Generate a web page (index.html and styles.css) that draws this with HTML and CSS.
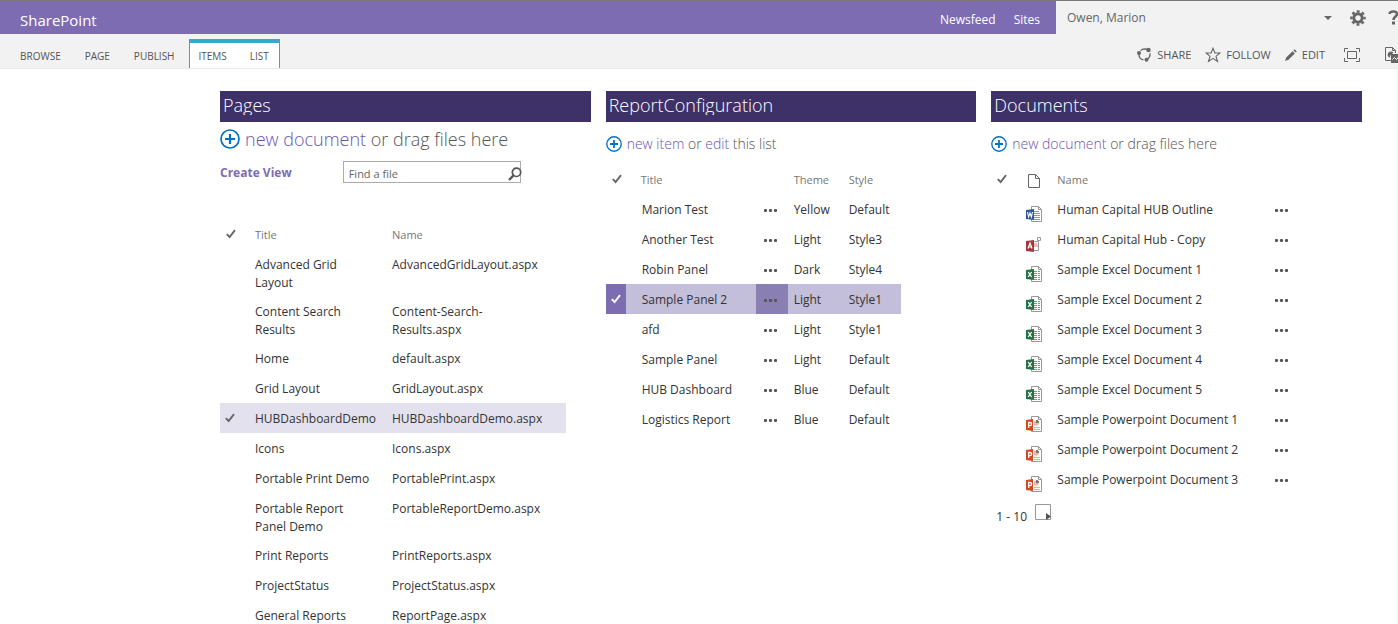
FILE: index.html
```html
<!DOCTYPE html>
<html lang="en">
<head>
<meta charset="utf-8">
<title>SharePoint</title>
<link rel="stylesheet" href="styles.css">
</head>
<body>
<svg class="sprite" aria-hidden="true">
  <symbol id="check" viewBox="0 0 10 10"><path d="M0.8 5.2 3.6 8 9 1.200" fill="none" stroke="currentColor" stroke-width="1.900"/></symbol>
  <symbol id="dots" viewBox="0 0 13 3"><circle cx="1.500" cy="1.500" r="1.600" fill="currentColor"/><circle cx="6.500" cy="1.500" r="1.600" fill="currentColor"/><circle cx="11.500" cy="1.500" r="1.600" fill="currentColor"/></symbol>
  <symbol id="plus" viewBox="0 0 20 20"><circle cx="10" cy="10" r="9" fill="none" stroke="#0072c6" stroke-width="1.7"/><path d="M10 5v10M5 10h10" stroke="#0072c6" stroke-width="2.2"/></symbol>
  <symbol id="page" viewBox="0 0 12 14"><path d="M.5.5h7l4 4v9H.5zM7.500.5v4h4" fill="#fff" stroke="#666"/></symbol>
  <symbol id="word" viewBox="0 0 16 16"><path d="M5.500.5h7l3 3v12h-10z" fill="#fff" stroke="#999"/><path d="M12.500.5v3h3" fill="none" stroke="#999"/><path d="M8 5.500h5M8 7.500h6M8 9.500h6M8 11.500h6M8 13.500h6" stroke="#999"/><path d="M0 4l8-1v11l-8-1z" fill="#2b579a"/><path d="M1.500 6l1.100 5L4 7l1.400 4 1.100-5" fill="none" stroke="#fff" stroke-width="1.100"/></symbol>
  <symbol id="access" viewBox="0 0 16 16"><path d="M11.500 1.500h3v3h-3zM8.500 5.500h4v9h-5M12 10h-4" fill="none" stroke="#999"/><path d="M8 7h3v3H8z" fill="#f2b6b6"/><path d="M0 5l8-1v12l-8-1z" fill="#a4373a"/><path d="M2 12.500 4 7l2 5.500M2.700 11h2.600" fill="none" stroke="#fff" stroke-width="1.200"/></symbol>
  <symbol id="excel" viewBox="0 0 16 16"><path d="M5.500.5h7l3 3v12h-10z" fill="#fff" stroke="#999"/><path d="M12.500.5v3h3" fill="none" stroke="#999"/><path d="M8 5.500h6M8 7.500h6M8 9.500h6M8 11.500h6M8 13.500h6" stroke="#5fa67c" stroke-dasharray="3 1"/><path d="M0 4l8-1v11l-8-1z" fill="#217346"/><path d="M2.200 6l3.400 5M5.600 6l-3.400 5" stroke="#fff" stroke-width="1.300"/></symbol>
  <symbol id="ppt" viewBox="0 0 16 16"><path d="M5.500.5h7l3 3v12h-10z" fill="#fff" stroke="#999"/><path d="M12.500.5v3h3" fill="none" stroke="#999"/><path d="M8 5h2v2h3a3 3 0 0 1-5 2z" fill="#f4b79f"/><path d="M10 4h2v1h1v2h-3z" fill="#777"/><path d="M8 11.500h6M8 13.500h6" stroke="#f4a98c"/><path d="M0 4l7-1v12l-7-1z" fill="#d24726"/><path d="M2.700 12V6.500h1.300a1.500 1.500 0 0 1 0 3.200H2.700" fill="none" stroke="#fff" stroke-width="1.300"/></symbol>
</svg>

<header class="suite">
  <div class="suite-brand">
    <a class="brand" href="#">SharePoint</a>
    <nav class="suite-links"><a href="#">Newsfeed</a><a href="#">Sites</a></nav>
  </div>
  <div class="suite-user">
    <button class="user">Owen, Marion<svg width="8" height="4" viewBox="0 0 8 4"><path d="M0 0h8L4 4z" fill="#666"/></svg></button>
    <button class="icon-btn" aria-label="Settings"><svg width="16" height="16" viewBox="0 0 16 16"><circle cx="8" cy="8" r="4.200" fill="none" stroke="#666" stroke-width="3"/><circle cx="8" cy="8" r="6.600" fill="none" stroke="#666" stroke-width="2.400" stroke-dasharray="2.800 2.380" stroke-dashoffset="1.400"/></svg></button>
    <button class="icon-btn help" aria-label="Help"><svg width="12" height="15" viewBox="0 0 12 15"><path d="M1.500 4C1.800 0.600 9.300 0.400 9 4.200 8.800 6.500 5.500 6.600 5.500 10" fill="none" stroke="#666" stroke-width="2.500"/><path d="M4 11.500h3v3H4z" fill="#666"/></svg></button>
  </div>
</header>

<div class="ribbon">
  <nav class="tabs">
    <a href="#">BROWSE</a><a href="#">PAGE</a><a href="#">PUBLISH</a>
    <span class="tab-group"><a href="#">ITEMS</a><a href="#">LIST</a></span>
  </nav>
  <div class="actions">
    <button><svg width="15" height="15" viewBox="0 0 15 15"><circle cx="7.500" cy="7.500" r="5.500" fill="none" stroke="#666" stroke-width="1.300" stroke-dasharray="8 3.520" stroke-dashoffset="2"/><circle cx="11.500" cy="3" r="2.200" fill="#666"/><circle cx="2" cy="6" r="2" fill="#666"/><circle cx="9.500" cy="12.800" r="2" fill="#666"/></svg>SHARE</button>
    <button><svg width="16" height="16" viewBox="0 0 16 16"><path d="M8 1.300 9.900 6H15l-4 3.400 1.500 5.100L8 11.400l-4.500 3.100L5 9.400 1 6h5.100z" fill="none" stroke="#666" stroke-width="1.100"/></svg>FOLLOW</button>
    <button><svg width="12" height="12" viewBox="0 0 12 12"><path d="M0 12l1.200-3.600L7.600 2.200l2.200 2.200L3.500 10.700zM8.400 1.400l1.200-1.200 2.200 2.200-1.200 1.200z" fill="#666"/></svg>EDIT</button>
    <button class="focus" aria-label="Focus on content"><svg width="16" height="14" viewBox="0 0 16 14"><path d="M3.500 3.500h9v7h-9zM.5 4V.5H4M12 .5h3.500V4M15.500 10v3.500H12M4 13.500H.5V10" fill="none" stroke="#666"/></svg></button>
    <button class="report" aria-label="Page report"><svg width="16" height="16" viewBox="0 0 16 16"><path d="M6 13.500H.5V.5h7l3 3V6M7.500.5v3h3" fill="none" stroke="#666"/><path d="M2.500 8a3.500 3.500 0 0 1 6-2.400l-2 1.900a2 2 0 0 0-.9 3.300A3.500 3.500 0 0 1 2.500 8zM6 7h10v9H6z" fill="#666"/><path d="M7.500 12.500l2-2 2 2 2.500-3" fill="none" stroke="#fff"/></svg></button>
  </div>
</div>

<main class="zones">
  <section>
    <h2 class="title"><span>Pages</span></h2>
    <p class="hero hero-large"><svg width="20" height="20"><use href="#plus"/></svg><span><a href="#">new document</a> or drag files here</span></p>
    <div class="tools">
      <a class="create" href="#">Create View</a>
      <form class="search"><input type="text" placeholder="Find a file" aria-label="Find a file"><button type="button" aria-label="Search"><svg width="14" height="14" viewBox="0 0 14 14"><circle cx="8.500" cy="5.300" r="4.200" fill="none" stroke="#555" stroke-width="1.700"/><path d="M5.500 8.400 1 13" stroke="#555" stroke-width="2.300"/></svg></button></form>
    </div>
    <table class="list pages">
      <colgroup><col class="w-check-wide"><col class="w-page-title"><col class="w-page-name"></colgroup>
      <thead><tr><th class="tick"><svg width="10" height="10"><use href="#check"/></svg></th><th>Title</th><th>Name</th></tr></thead>
      <tbody>
        <tr><td></td><td>Advanced Grid Layout</td><td><a href="#">AdvancedGridLayout.aspx</a></td></tr>
        <tr><td></td><td>Content Search Results</td><td><a href="#">Content-Search-<wbr>Results.aspx</a></td></tr>
        <tr><td></td><td>Home</td><td><a href="#">default.aspx</a></td></tr>
        <tr><td></td><td>Grid Layout</td><td><a href="#">GridLayout.aspx</a></td></tr>
        <tr class="current"><td class="tick"><svg width="10" height="10"><use href="#check"/></svg></td><td>HUBDashboardDemo</td><td><a href="#">HUBDashboardDemo.aspx</a></td></tr>
        <tr><td></td><td>Icons</td><td><a href="#">Icons.aspx</a></td></tr>
        <tr><td></td><td>Portable Print Demo</td><td><a href="#">PortablePrint.aspx</a></td></tr>
        <tr><td></td><td>Portable Report Panel Demo</td><td><a href="#">PortableReportDemo.aspx</a></td></tr>
        <tr><td></td><td>Print Reports</td><td><a href="#">PrintReports.aspx</a></td></tr>
        <tr><td></td><td>ProjectStatus</td><td><a href="#">ProjectStatus.aspx</a></td></tr>
        <tr><td></td><td>General Reports</td><td><a href="#">ReportPage.aspx</a></td></tr>
      </tbody>
    </table>
  </section>

  <section>
    <h2 class="title"><span>ReportConfiguration</span></h2>
    <p class="hero"><svg width="16" height="16"><use href="#plus"/></svg><span><a href="#">new item</a> or <a href="#">edit</a> this list</span></p>
    <table class="list reports">
      <colgroup><col class="w-check"><col class="w-report-title"><col class="w-menu"><col class="w-theme"><col class="w-style"></colgroup>
      <thead><tr><th class="tick"><svg width="10" height="10"><use href="#check"/></svg></th><th class="inset">Title</th><th></th><th>Theme</th><th>Style</th></tr></thead>
      <tbody>
        <tr><td></td><td class="inset"><a href="#">Marion Test</a></td><td class="menu"><button aria-label="Open menu"><svg width="13" height="3"><use href="#dots"/></svg></button></td><td>Yellow</td><td>Default</td></tr>
        <tr><td></td><td class="inset"><a href="#">Another Test</a></td><td class="menu"><button aria-label="Open menu"><svg width="13" height="3"><use href="#dots"/></svg></button></td><td>Light</td><td>Style3</td></tr>
        <tr><td></td><td class="inset"><a href="#">Robin Panel</a></td><td class="menu"><button aria-label="Open menu"><svg width="13" height="3"><use href="#dots"/></svg></button></td><td>Dark</td><td>Style4</td></tr>
        <tr class="selected"><td class="tick"><svg width="10" height="10"><use href="#check"/></svg></td><td class="inset"><a href="#">Sample Panel 2</a></td><td class="menu"><button aria-label="Open menu"><svg width="13" height="3"><use href="#dots"/></svg></button></td><td>Light</td><td>Style1</td></tr>
        <tr><td></td><td class="inset"><a href="#">afd</a></td><td class="menu"><button aria-label="Open menu"><svg width="13" height="3"><use href="#dots"/></svg></button></td><td>Light</td><td>Style1</td></tr>
        <tr><td></td><td class="inset"><a href="#">Sample Panel</a></td><td class="menu"><button aria-label="Open menu"><svg width="13" height="3"><use href="#dots"/></svg></button></td><td>Light</td><td>Default</td></tr>
        <tr><td></td><td class="inset"><a href="#">HUB Dashboard</a></td><td class="menu"><button aria-label="Open menu"><svg width="13" height="3"><use href="#dots"/></svg></button></td><td>Blue</td><td>Default</td></tr>
        <tr><td></td><td class="inset"><a href="#">Logistics Report</a></td><td class="menu"><button aria-label="Open menu"><svg width="13" height="3"><use href="#dots"/></svg></button></td><td>Blue</td><td>Default</td></tr>
      </tbody>
    </table>
  </section>

  <section>
    <h2 class="title"><span>Documents</span></h2>
    <p class="hero"><svg width="16" height="16"><use href="#plus"/></svg><span><a href="#">new document</a> or drag files here</span></p>
    <table class="list documents">
      <colgroup><col class="w-check-doc"><col class="w-icon"><col class="w-doc-name"><col class="w-menu"></colgroup>
      <thead><tr><th class="tick"><svg width="10" height="10"><use href="#check"/></svg></th><th class="type"><svg width="12" height="14"><use href="#page"/></svg></th><th>Name</th><th></th></tr></thead>
      <tbody>
        <tr><td></td><td class="file"><svg width="16" height="16"><use href="#word"/></svg></td><td><a href="#">Human Capital HUB Outline</a></td><td class="menu"><button aria-label="Open menu"><svg width="13" height="3"><use href="#dots"/></svg></button></td></tr>
        <tr><td></td><td class="file"><svg width="16" height="16"><use href="#access"/></svg></td><td><a href="#">Human Capital Hub - Copy</a></td><td class="menu"><button aria-label="Open menu"><svg width="13" height="3"><use href="#dots"/></svg></button></td></tr>
        <tr><td></td><td class="file"><svg width="16" height="16"><use href="#excel"/></svg></td><td><a href="#">Sample Excel Document 1</a></td><td class="menu"><button aria-label="Open menu"><svg width="13" height="3"><use href="#dots"/></svg></button></td></tr>
        <tr><td></td><td class="file"><svg width="16" height="16"><use href="#excel"/></svg></td><td><a href="#">Sample Excel Document 2</a></td><td class="menu"><button aria-label="Open menu"><svg width="13" height="3"><use href="#dots"/></svg></button></td></tr>
        <tr><td></td><td class="file"><svg width="16" height="16"><use href="#excel"/></svg></td><td><a href="#">Sample Excel Document 3</a></td><td class="menu"><button aria-label="Open menu"><svg width="13" height="3"><use href="#dots"/></svg></button></td></tr>
        <tr><td></td><td class="file"><svg width="16" height="16"><use href="#excel"/></svg></td><td><a href="#">Sample Excel Document 4</a></td><td class="menu"><button aria-label="Open menu"><svg width="13" height="3"><use href="#dots"/></svg></button></td></tr>
        <tr><td></td><td class="file"><svg width="16" height="16"><use href="#excel"/></svg></td><td><a href="#">Sample Excel Document 5</a></td><td class="menu"><button aria-label="Open menu"><svg width="13" height="3"><use href="#dots"/></svg></button></td></tr>
        <tr><td></td><td class="file"><svg width="16" height="16"><use href="#ppt"/></svg></td><td><a href="#">Sample Powerpoint Document 1</a></td><td class="menu"><button aria-label="Open menu"><svg width="13" height="3"><use href="#dots"/></svg></button></td></tr>
        <tr><td></td><td class="file"><svg width="16" height="16"><use href="#ppt"/></svg></td><td><a href="#">Sample Powerpoint Document 2</a></td><td class="menu"><button aria-label="Open menu"><svg width="13" height="3"><use href="#dots"/></svg></button></td></tr>
        <tr><td></td><td class="file"><svg width="16" height="16"><use href="#ppt"/></svg></td><td><a href="#">Sample Powerpoint Document 3</a></td><td class="menu"><button aria-label="Open menu"><svg width="13" height="3"><use href="#dots"/></svg></button></td></tr>
      </tbody>
    </table>
    <div class="pager"><span>1 - 10</span><button aria-label="Next page"><svg width="16" height="16" viewBox="0 0 16 16"><path d="M.5.5h15v15H.5z" fill="#fff" stroke="#999"/><path d="M11 9l5 3.500-5 3.500z" fill="#555"/></svg></button></div>
  </section>
</main>
</body>
</html>
```
FILE: styles.css
```css
* { box-sizing: border-box; }
body {
  margin: 0;
  min-height: 100vh;
  display: flex;
  flex-direction: column;
  overflow: hidden;
  background: #fff;
  color: #333;
  font: 12px/18px "Segoe UI", "Open Sans", "Noto Sans", sans-serif;
}
a { color: inherit; text-decoration: none; }
button { padding: 0; border: 0; background: none; font: inherit; color: inherit; cursor: pointer; }
svg { display: block; flex: none; }
.sprite { position: absolute; width: 0; height: 0; }

.suite { display: flex; height: 34px; border-top: 1px solid #777; background: #f2f2f2; }
.suite-brand { flex: 1; display: flex; align-items: center; justify-content: space-between; padding: 4px 16px 0 20px; background: #7e6cb3; color: #fff; }
.brand { font-size: 15px; }
.suite-links { display: flex; gap: 18px; }
.suite-user { width: 342px; display: flex; align-items: center; padding-left: 11px; overflow: hidden; color: #666; }
.user { flex: none; width: 265px; display: flex; align-items: center; justify-content: space-between; }
.icon-btn { flex: none; margin-left: 18px; }
.help { margin-left: 22px; }

.ribbon { display: flex; justify-content: space-between; height: 35px; overflow: hidden; background: #f2f2f2; border-bottom: 1px solid #eaeaea; color: #555; font-size: 11px; }
.tabs { display: flex; align-items: flex-end; padding-left: 20px; gap: 24px; font-size: 10px; }
.tabs > a { padding-bottom: 3px; }
.tab-group { display: flex; gap: 23px; height: 29px; margin-left: -10px; padding: 4px 10px 0 9px; border: 1px solid #35a8cc; border-top-width: 4px; border-bottom: 0; background: #fff; }
.actions { display: flex; align-items: center; margin-right: -3px; padding-top: 7px; gap: 14px; }
.actions button { display: flex; align-items: center; gap: 5px; }
.actions .focus { margin-left: 5px; }
.actions .report { margin-left: 11px; }

.zones { flex: 1; display: grid; grid-template-columns: repeat(3, minmax(0, 1fr)); gap: 15px; padding: 22px 35px 0 220px; border-right: 1px solid #f2f2f2; }
.title { margin: 0; height: 31px; padding: 0 3px; background: #3d3168; color: #fff; font-size: 18px; font-weight: 300; line-height: 28px; }
.title span { display: block; height: 24px; overflow: hidden; }
.hero { display: flex; align-items: center; gap: 5px; height: 42px; margin: 0; padding-top: 2px; font-size: 14px; font-weight: 300; color: #555; }
.hero a { color: #6b55ab; }
.hero-large { height: 39px; padding: 0 0 5px; font-size: 18px; }

.tools { display: flex; gap: 51px; height: 58px; line-height: 24px; }
.create { color: #7e6cb3; font-size: 12px; font-weight: 700; }
.search { position: relative; width: 178px; height: 22px; }
.search input { display: block; width: 100%; height: 100%; padding: 3px 20px 0 5px; border: 1px solid #ababab; color: #666; font: inherit; font-size: 11px; }
.search input::placeholder { color: #666; opacity: 1; }
.search button { position: absolute; right: -1px; top: 6px; }

.list { border-collapse: collapse; table-layout: fixed; }
.pages { width: 346px; }
.reports { width: 295px; }
.documents { width: 307px; }
.w-check-wide { width: 35px; }
.w-page-title { width: 137px; }
.w-page-name { width: 174px; }
.w-check { width: 20px; }
.w-report-title { width: 130px; }
.w-menu { width: 32px; }
.w-theme { width: 55px; }
.w-style { width: 58px; }
.w-check-doc { width: 29px; }
.w-icon { width: 37px; }
.w-doc-name { width: 209px; }
.list tr { height: 30px; }
.list th, .list td { padding: 7px 0 4px; text-align: left; vertical-align: top; white-space: nowrap; }
.list th { font-size: 11px; font-weight: 400; color: #777; }
.pages td { padding-right: 17px; white-space: normal; }
.reports th:nth-child(n+4), .reports td:nth-child(n+4) { padding-left: 6px; }
.list .inset { padding-left: 16px; }
.list th.inset { padding-left: 15px; }
.list .tick { padding: 10px 0 0 6px; color: #666; }
.list td.tick { padding-left: 5px; }
.list .type { padding-left: 8px; padding-top: 10px; }
.list .file { padding: 12px 0 0 6px; }
.list .menu { padding: 6px 0 5px; }
.menu button { display: flex; align-items: center; justify-content: center; width: 30px; height: 18px; padding-top: 3px; color: #555; }
.current { background: #e3e1ee; }
.selected { background: #c3bed9; }
.list .selected .tick { background: #7e6cb3; color: #fff; }
.selected .menu { background: #8a7fb3; }

.pager { display: flex; align-items: flex-start; gap: 8px; padding: 10px 5px; }
.pager span { padding-top: 4px; }
```
